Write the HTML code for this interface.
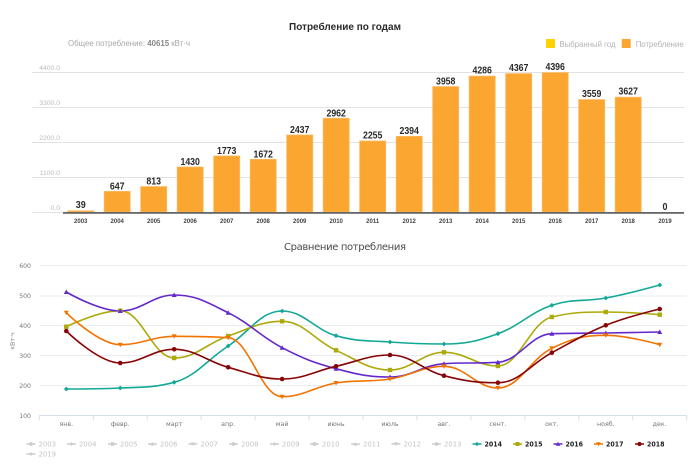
<!DOCTYPE html>
<html lang="ru">
<head>
<meta charset="utf-8">
<title>Потребление</title>
<style>
html,body{margin:0;padding:0;background:#fff;width:700px;height:467px;overflow:hidden}
svg{display:block;filter:blur(.28px)}
.s{font-family:"Liberation Sans",sans-serif}
.d{font-family:"DejaVu Sans",sans-serif}
.v text{font-family:"Liberation Sans",sans-serif;font-size:10px;font-weight:bold;fill:#2a2a2a;text-anchor:middle}
.xa text{font-family:"Liberation Sans",sans-serif;font-size:6px;font-weight:bold;fill:#444;text-anchor:middle}
.ya text{font-family:"Liberation Sans",sans-serif;font-size:6.8px;fill:#bbb;text-anchor:end}
.yb text{font-family:"DejaVu Sans",sans-serif;font-size:6.2px;fill:#777;text-anchor:end}
.xb text{font-family:"DejaVu Sans",sans-serif;font-size:6.3px;fill:#777;text-anchor:middle}
.lg text{font-family:"DejaVu Sans",sans-serif;font-size:7px;fill:#c4c4c4}
.lg text.on{font-weight:bold;fill:#222;font-size:7px}
.bars rect{fill:#fba630;stroke:#fdb85f;stroke-width:.8}
</style>
</head>
<body>
<svg id="c" xmlns="http://www.w3.org/2000/svg" width="700" height="467" viewBox="0 0 700 467">
<rect width="700" height="467" fill="#fff"/>
<text class="s" x="289" y="30" font-size="10.5" font-weight="bold" fill="#2a2a2a" textLength="112" lengthAdjust="spacingAndGlyphs">Потребление по годам</text>
<text class="s" x="68" y="46" font-size="8.7" fill="#a8a8a8" textLength="122" lengthAdjust="spacingAndGlyphs">Общее потребление: <tspan font-weight="bold" fill="#888">40615</tspan> кВт·ч</text>
<rect x="546" y="39" width="9" height="9" fill="#ffd200"/>
<text class="s" x="559.5" y="47" font-size="8" fill="#b4b4b4" textLength="56" lengthAdjust="spacingAndGlyphs">Выбранный год</text>
<rect x="621.7" y="39" width="9" height="9" fill="#fba630"/>
<text class="s" x="635.7" y="47" font-size="8" fill="#b4b4b4" textLength="48" lengthAdjust="spacingAndGlyphs">Потребление</text>

<g stroke="#e2e2e2" stroke-width="1">
<line x1="32" x2="684" y1="72.5" y2="72.5"/>
<line x1="32" x2="684" y1="107.5" y2="107.5"/>
<line x1="32" x2="684" y1="142.5" y2="142.5"/>
<line x1="32" x2="684" y1="177.5" y2="177.5"/>
<line x1="32" x2="684" y1="212.5" y2="212.5"/>
</g>
<g class="ya">
<text x="60" y="70">4400.0</text>
<text x="60" y="105">3300.0</text>
<text x="60" y="140">2200.0</text>
<text x="60" y="175">1100.0</text>
<text x="60" y="210">0.0</text>
</g>
<g class="bars">
<rect x="67.7" y="210.8" width="26" height="1.2"/>
<rect x="104.2" y="191.4" width="26" height="20.6"/>
<rect x="140.7" y="186.6" width="26" height="25.4"/>
<rect x="177.2" y="167" width="26" height="45"/>
<rect x="213.7" y="156" width="26" height="56"/>
<rect x="250.2" y="159.3" width="26" height="52.7"/>
<rect x="286.7" y="135" width="26" height="77"/>
<rect x="323.2" y="118.3" width="26" height="93.7"/>
<rect x="359.7" y="141" width="26" height="71"/>
<rect x="396.2" y="136.3" width="26" height="75.7"/>
<rect x="432.7" y="86.6" width="26" height="125.4"/>
<rect x="469.2" y="76.1" width="26" height="135.9"/>
<rect x="505.7" y="73.6" width="26" height="138.4"/>
<rect x="542.2" y="72.6" width="26" height="139.4"/>
<rect x="578.7" y="99.6" width="26" height="112.4"/>
<rect x="615.2" y="97.2" width="26" height="114.8"/>
</g>
<rect x="63" y="212" width="621" height="1.8" fill="#666"/>
<g class="v">
<text x="80.7" y="208" textLength="10" lengthAdjust="spacingAndGlyphs">39</text>
<text x="117.2" y="189.5" textLength="14.7" lengthAdjust="spacingAndGlyphs">647</text>
<text x="153.7" y="184.5" textLength="14.7" lengthAdjust="spacingAndGlyphs">813</text>
<text x="190.2" y="165" textLength="19.5" lengthAdjust="spacingAndGlyphs">1430</text>
<text x="226.7" y="154" textLength="19.5" lengthAdjust="spacingAndGlyphs">1773</text>
<text x="263.2" y="157.3" textLength="19.5" lengthAdjust="spacingAndGlyphs">1672</text>
<text x="299.7" y="133" textLength="19.5" lengthAdjust="spacingAndGlyphs">2437</text>
<text x="336.2" y="116.3" textLength="19.5" lengthAdjust="spacingAndGlyphs">2962</text>
<text x="372.7" y="138.5" textLength="19.5" lengthAdjust="spacingAndGlyphs">2255</text>
<text x="409.2" y="134" textLength="19.5" lengthAdjust="spacingAndGlyphs">2394</text>
<text x="445.7" y="84.5" textLength="19.5" lengthAdjust="spacingAndGlyphs">3958</text>
<text x="482.2" y="73.5" textLength="19.5" lengthAdjust="spacingAndGlyphs">4286</text>
<text x="518.7" y="71" textLength="19.5" lengthAdjust="spacingAndGlyphs">4367</text>
<text x="555.2" y="70" textLength="19.5" lengthAdjust="spacingAndGlyphs">4396</text>
<text x="591.7" y="97" textLength="19.5" lengthAdjust="spacingAndGlyphs">3559</text>
<text x="628.2" y="94.5" textLength="19.5" lengthAdjust="spacingAndGlyphs">3627</text>
<text x="665" y="210" textLength="5" lengthAdjust="spacingAndGlyphs">0</text>
</g>
<g class="xa">
<text x="80.7" y="223">2003</text><text x="117.2" y="223">2004</text><text x="153.7" y="223">2005</text><text x="190.2" y="223">2006</text><text x="226.7" y="223">2007</text><text x="263.2" y="223">2008</text><text x="299.7" y="223">2009</text><text x="336.2" y="223">2010</text><text x="372.7" y="223">2011</text><text x="409.2" y="223">2012</text><text x="445.7" y="223">2013</text><text x="482.2" y="223">2014</text><text x="518.7" y="223">2015</text><text x="555.2" y="223">2016</text><text x="591.7" y="223">2017</text><text x="628.2" y="223">2018</text><text x="665" y="223">2019</text>
</g>

<text class="d" x="284" y="250" font-size="10" fill="#4a4a4a" textLength="122" lengthAdjust="spacing">Сравнение потребления</text>
<g stroke="#e8ebf0" stroke-width="1">
<line x1="39.3" x2="686.7" y1="265.5" y2="265.5"/>
<line x1="39.3" x2="686.7" y1="296" y2="296"/>
<line x1="39.3" x2="686.7" y1="325.5" y2="325.5"/>
<line x1="39.3" x2="686.7" y1="355.5" y2="355.5"/>
<line x1="39.3" x2="686.7" y1="385.5" y2="385.5"/>
</g>
<g class="yb">
<text x="31" y="268">600</text><text x="31" y="298">500</text><text x="31" y="328">400</text><text x="31" y="358">300</text><text x="31" y="388">200</text><text x="31" y="418">100</text>
</g>
<text class="d" transform="translate(14.5,341) rotate(-90)" font-size="6.3" fill="#888" text-anchor="middle">кВт·ч</text>
<g id="axis" stroke="#d5e0ee" stroke-width="1"><line x1="39.3" x2="686.7" y1="415.5" y2="415.5"/></g>
<g class="xb">
<text x="66.3" y="426">янв.</text><text x="120.2" y="426">февр.</text><text x="174.2" y="426">март</text><text x="228.1" y="426">апр.</text><text x="282.1" y="426">май</text><text x="336" y="426">июнь</text><text x="390" y="426">июль</text><text x="443.9" y="426">авг.</text><text x="497.9" y="426">сент.</text><text x="551.8" y="426">окт.</text><text x="605.8" y="426">нояб.</text><text x="659.7" y="426">дек.</text>
</g>
<g class="lg">
<text x="38.5" y="446.5" textLength="17.5" lengthAdjust="spacingAndGlyphs">2003</text>
<text x="79" y="446.5" textLength="17.5" lengthAdjust="spacingAndGlyphs">2004</text>
<text x="120" y="446.5" textLength="17.5" lengthAdjust="spacingAndGlyphs">2005</text>
<text x="160" y="446.5" textLength="17.5" lengthAdjust="spacingAndGlyphs">2006</text>
<text x="200.5" y="446.5" textLength="17.5" lengthAdjust="spacingAndGlyphs">2007</text>
<text x="241" y="446.5" textLength="17.5" lengthAdjust="spacingAndGlyphs">2008</text>
<text x="282" y="446.5" textLength="17.5" lengthAdjust="spacingAndGlyphs">2009</text>
<text x="322" y="446.5" textLength="17.5" lengthAdjust="spacingAndGlyphs">2010</text>
<text x="363" y="446.5" textLength="17.5" lengthAdjust="spacingAndGlyphs">2011</text>
<text x="403.5" y="446.5" textLength="17.5" lengthAdjust="spacingAndGlyphs">2012</text>
<text x="444" y="446.5" textLength="17.5" lengthAdjust="spacingAndGlyphs">2013</text>
<text class="on" x="484.5" y="446.5" textLength="17.5" lengthAdjust="spacingAndGlyphs">2014</text>
<text class="on" x="525" y="446.5" textLength="17.5" lengthAdjust="spacingAndGlyphs">2015</text>
<text class="on" x="565.5" y="446.5" textLength="17.5" lengthAdjust="spacingAndGlyphs">2016</text>
<text class="on" x="606" y="446.5" textLength="17.5" lengthAdjust="spacingAndGlyphs">2017</text>
<text class="on" x="647" y="446.5" textLength="17.5" lengthAdjust="spacingAndGlyphs">2018</text>
<text x="38.5" y="456.5" textLength="17.5" lengthAdjust="spacingAndGlyphs">2019</text>
</g>
<g id="plot"></g>
</svg>
<script>
(function(){
var NS='http://www.w3.org/2000/svg',plot=document.getElementById('plot'),axis=document.getElementById('axis');
function el(n,a,p){var e=document.createElementNS(NS,n);for(var k in a)e.setAttribute(k,a[k]);(p||plot).appendChild(e);return e}
for(var i=0;i<=12;i++){var tx=39.3+53.95*i;el('line',{x1:tx,x2:tx,y1:415.5,y2:420.5},axis)}
var X=[];for(i=0;i<12;i++)X.push(66.3+53.95*i);
var S=[
{c:'#12a896',m:'d',y:[389,388,382.3,346,311,335.7,342,344,333.7,305.3,298,285]},
{c:'#aca908',m:'s',y:[326.7,310.7,358,336,321.3,350.3,370,352.3,366,317,312,314.7]},
{c:'#6428cc',m:'t',y:[292,311,295,312.7,347.7,368.7,377,363.7,362.3,333.7,333,332]},
{c:'#f27400',m:'v',y:[312.7,344.7,336.3,337.7,396.7,383,379,366.3,388,348.3,335.3,344.7]},
{c:'#860404',m:'c',y:[331,363,349.3,367.3,379,366.3,355,375.7,382.7,352.7,325.3,309]}
];
function mark(t,x,y,c,k){
 k=k||1;
 if(t=='c')el('circle',{cx:x,cy:y,r:2.3*k,fill:c});
 if(t=='s')el('rect',{x:x-2.2*k,y:y-2.2*k,width:4.4*k,height:4.4*k,fill:c});
 if(t=='d')el('path',{d:'M'+x+' '+(y-2.4*k)+'L'+(x+2.4*k)+' '+y+'L'+x+' '+(y+2.4*k)+'L'+(x-2.4*k)+' '+y+'Z',fill:c});
 if(t=='t')el('path',{d:'M'+x+' '+(y-2.5*k)+'L'+(x+2.5*k)+' '+(y+2*k)+'L'+(x-2.5*k)+' '+(y+2*k)+'Z',fill:c});
 if(t=='v')el('path',{d:'M'+x+' '+(y+2.5*k)+'L'+(x+2.5*k)+' '+(y-2*k)+'L'+(x-2.5*k)+' '+(y-2*k)+'Z',fill:c});
}
function spline(xs,ys){
 var n=xs.length,L=[],R=[],d='M'+xs[0]+' '+ys[0];
 for(var i=1;i<n-1;i++){
  var px=xs[i],py=ys[i],lx=(1.5*px+xs[i-1])/2.5,ly=(1.5*py+ys[i-1])/2.5,rx=(1.5*px+xs[i+1])/2.5,ry=(1.5*py+ys[i+1])/2.5;
  var cor=((ry-ly)*(rx-px))/(rx-lx)+py-ry;ly+=cor;ry+=cor;
  var a=ys[i-1],b=ys[i+1];
  if(ly>a&&ly>py){ly=Math.max(a,py);ry=2*py-ly}else if(ly<a&&ly<py){ly=Math.min(a,py);ry=2*py-ly}
  if(ry>b&&ry>py){ry=Math.max(py,b);ly=2*py-ry}else if(ry<b&&ry<py){ry=Math.min(py,b);ly=2*py-ry}
  L[i]=[lx,ly];R[i]=[rx,ry];
 }
 for(i=1;i<n;i++){
  var c1=R[i-1]||[xs[i-1],ys[i-1]],c2=L[i]||[xs[i],ys[i]];
  d+='C'+c1[0].toFixed(2)+' '+c1[1].toFixed(2)+' '+c2[0].toFixed(2)+' '+c2[1].toFixed(2)+' '+xs[i]+' '+ys[i];
 }
 return d;
}
S.forEach(function(s){
 el('path',{d:spline(X,s.y),fill:'none',stroke:s.c,'stroke-width':1.6,'stroke-linejoin':'round'});
});
S.forEach(function(s){
 s.y.forEach(function(y,i){mark(s.m,X[i],y,s.c)});
});
var hidden=[[38.5,'c'],[79,'d'],[120,'s'],[160,'t'],[200.5,'v'],[241,'c'],[282,'d'],[322,'s'],[363,'t'],[403.5,'v'],[444,'c']];
hidden.forEach(function(h){
 el('line',{x1:h[0]-12,x2:h[0]-3,y1:444,y2:444,stroke:'#ccc','stroke-width':1.5});
 mark(h[1],h[0]-7.5,444,'#ccc',.8);
});
el('line',{x1:26.5,x2:35.5,y1:454,y2:454,stroke:'#ccc','stroke-width':1.5});
mark('d',31,454,'#ccc',.8);
var act=[484.5,525,565.5,606,647];
S.forEach(function(s,i){
 var t=act[i];
 el('line',{x1:t-12,x2:t-3,y1:444,y2:444,stroke:s.c,'stroke-width':1.5});
 mark(s.m,t-7.5,444,s.c,.9);
});
})();
</script>
</body>
</html>
